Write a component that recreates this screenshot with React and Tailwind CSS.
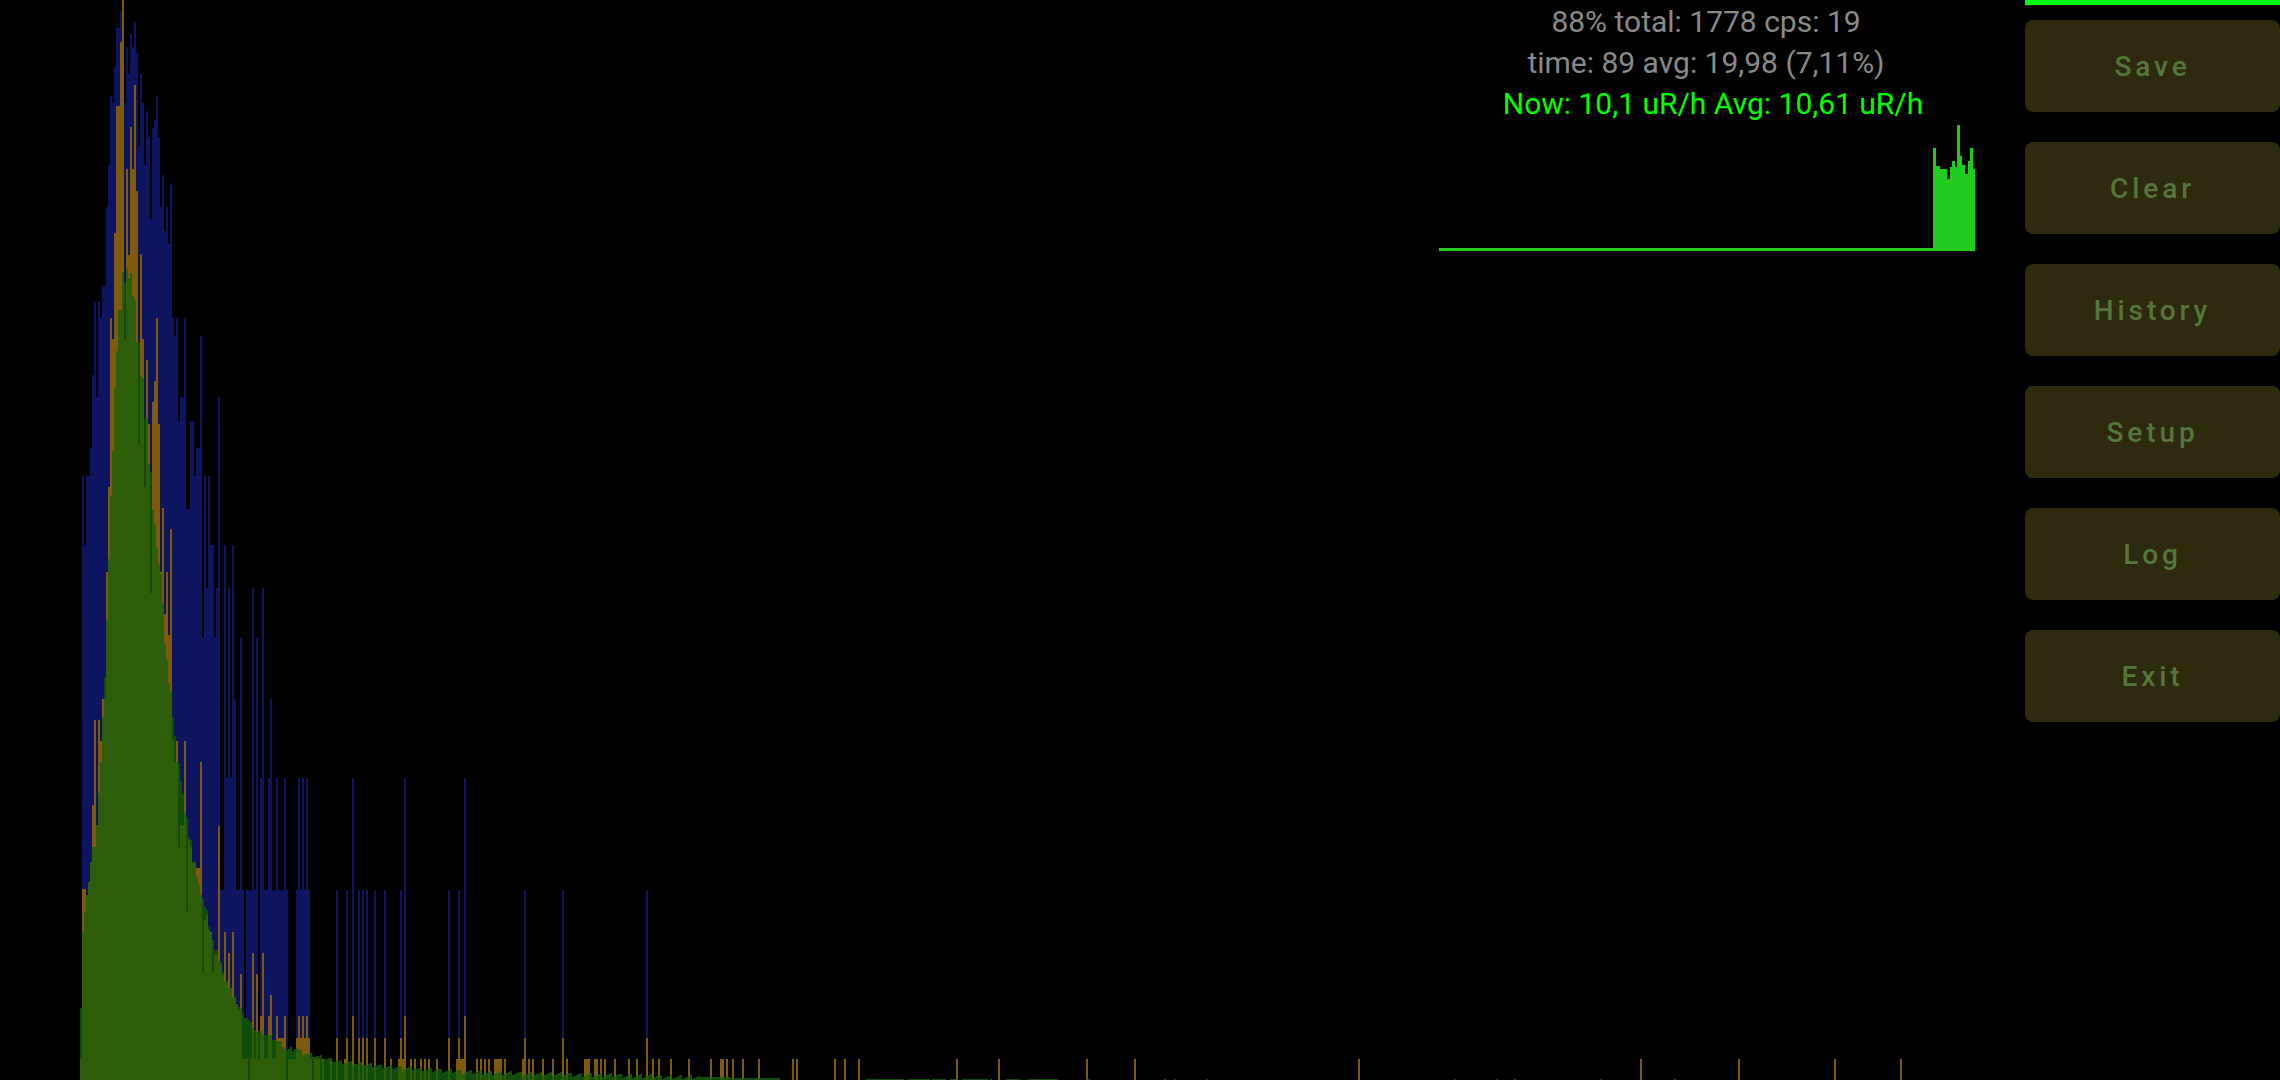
import React from 'react';

const BOTTOM = 1080;
const BLUE_C = '#0e1560';
const ORANGE_C = '#7f5a0e';
const OLIVE_C = '#2e5e0a';
const DARK_C = '#124e0b';

// column tops read off the picture, one value per 2px column
const blueStart = 82;
const blueTops = [476, 545, 476, 476, 448, 375, 302, 397, 302, 318, 286, 286, 207, 165, 96, 103, 67, 28, 28, 11, 0, 103, 47, 74, 34, 47, 22, 53, 146, 74, 103, 165, 111, 137, 219, 128, 120, 96, 137, 207, 175, 231, 207, 244, 185, 318, 336, 318, 421, 397, 397, 318, 509, 509, 421, 421, 476, 448, 448, 336, 638, 476, 588, 476, 545, 545, 638, 588, 397, 890, 890, 545, 778, 588, 778, 545, 699];

const orangeStart = 80;
const orangeTops = [1059, 889, 889, 895, 882, 862, 805, 720, 825, 720, 741, 699, 699, 572, 487, 318, 339, 233, 106, 106, 42, 0, 339, 169, 255, 127, 169, 85, 191, 445, 254, 339, 487, 360, 424, 593, 402, 381, 318, 424, 572, 508, 614, 572, 635, 529, 741, 762, 741, 847, 825, 825, 741, 911, 840, 847, 862, 862, 868, 868, 762, 973, 920, 915, 930, 932, 973, 955, 955, 826, 965, 975, 932, 981, 953, 988, 932, 997, 1004, 1010];

const greenStart = 80;
const greenTops = [1008, 932, 912, 895, 882, 862, 847, 847, 825, 793, 762, 717, 677, 619, 559, 496, 451, 388, 351, 310, 310, 272, 283, 268, 278, 273, 296, 300, 342, 342, 376, 378, 419, 419, 464, 472, 510, 524, 548, 564, 574, 603, 644, 660, 683, 691, 717, 736, 762, 763, 781, 793, 812, 817, 837, 840, 862, 862, 877, 884, 895, 899, 907, 910, 927, 932, 940, 951, 950, 961, 962, 972, 981, 981, 988, 988, 997, 997, 1004, 1007, 1008, 1013, 1018];

// green tail: x, top
const greenTail = [[246, 1018], [256, 1032], [262, 1033], [270, 1037], [280, 1043], [286, 1050], [296, 1048], [300, 1052], [310, 1055], [320, 1057], [330, 1060], [340, 1062], [350, 1063], [370, 1065], [390, 1067], [410, 1068], [430, 1070], [450, 1071], [470, 1072], [500, 1073], [540, 1074], [600, 1075], [680, 1077], [780, 1078]];

const blueSpikes = { 240: 638, 252: 588, 256: 638, 260: 778, 262: 588, 268: 778, 270: 699, 276: 778, 284: 778, 298: 778, 302: 778, 306: 778, 352: 778, 404: 778, 464: 778 };
const blueFlat = [336, 346, 358, 362, 366, 374, 384, 400, 448, 458, 524, 562, 646];

const orange1038 = [336, 346, 358, 362, 366, 374, 384, 400, 448, 458, 524, 562, 646, 278, 280, 282, 286, 296, 300, 304, 308];
const orangeSpikes = { 240: 974, 252: 953, 256: 974, 260: 1016, 262: 953, 268: 1016, 270: 995, 276: 1016, 284: 1016, 298: 1016, 302: 1016, 306: 1016, 352: 1016, 404: 1016, 464: 1016 };
const orange1059 = [330, 344, 390, 398, 402, 410, 414, 420, 424, 428, 436, 456, 460, 462, 476, 480, 484, 488, 494, 496, 498, 500, 504, 522, 528, 532, 542, 552, 566, 584, 586, 588, 594, 596, 600, 604, 614, 628, 636, 652, 658, 670, 688, 710, 720, 722, 726, 732, 742, 758, 792, 796, 834, 844, 858, 956, 998, 1086, 1134, 1358, 1640, 1738, 1834, 1900];
const noOrange = [248, 286, 312, 320, 324];

const sparseGreen = [[866, 903], [907, 928], [932, 945], [949, 957], [961, 986], [990, 990], [1006, 1019], [1027, 1056], [1085, 1089], [1164, 1164], [1174, 1174], [1206, 1206], [1454, 1454], [1467, 1467], [1475, 1475], [1496, 1496], [1514, 1514], [1587, 1587], [1600, 1600], [1625, 1625], [1647, 1647], [1674, 1674], [1749, 1749], [1767, 1767]];

function tailGreen(x) {
  for (let i = 0; i < greenTail.length - 1; i++) {
    const [x0, y0] = greenTail[i];
    const [x1, y1] = greenTail[i + 1];
    if (x >= x0 && x < x1) {
      const y = y0 + ((y1 - y0) * (x - x0)) / (x1 - x0);
      const jitter = x < 700 ? ((x * 7) % 5) - 2 : (x * 3) % 2;
      return Math.min(1079, Math.round(y + jitter));
    }
  }
  return null;
}

function buildColumns() {
  const cols = [];
  for (let x = 80; x <= 1902; x += 2) {
    let b = null;
    let o = null;
    let g = null;

    const bi = (x - blueStart) / 2;
    if (bi >= 0 && bi < blueTops.length) b = blueTops[bi];
    if (x >= 236 && x <= 286 && x !== 244 && x !== 258) b = 890;
    if (x >= 296 && x <= 308) b = 890;
    if (blueFlat.includes(x)) b = 890;
    if (blueSpikes[x]) b = blueSpikes[x];

    const oi = (x - orangeStart) / 2;
    if (oi >= 0 && oi < orangeTops.length) o = orangeTops[oi];
    else if (x < 326) o = 1059;
    if (orange1059.includes(x)) o = 1059;
    if (orange1038.includes(x)) o = 1038;
    if (orangeSpikes[x]) o = orangeSpikes[x];
    if (noOrange.includes(x)) o = null;

    const gi = (x - greenStart) / 2;
    if (gi < greenTops.length) g = greenTops[gi];
    else if (x < 866) g = tailGreen(x);
    if (sparseGreen.some(([a, c]) => x >= a && x <= c)) g = 1079;

    cols.push({ x, b, o, g });
  }
  return cols;
}

function Histogram() {
  const cols = buildColumns();
  return (
    <svg width="2025" height="1080" className="block [grid-area:1/1]" shapeRendering="crispEdges">
      {cols.map(({ x, b, o, g }) => (
        <g key={x}>
          {b !== null && <rect x={x} y={b} width="2" height={BOTTOM - b} fill={BLUE_C} />}
          {o !== null && <rect x={x} y={o} width="2" height={BOTTOM - o} fill={ORANGE_C} />}
          {g !== null && <rect x={x} y={g} width="2" height={BOTTOM - g} fill={DARK_C} />}
          {g !== null && o !== null && (
            <rect x={x} y={Math.max(g, o)} width="2" height={BOTTOM - Math.max(g, o)} fill={OLIVE_C} />
          )}
        </g>
      ))}
    </svg>
  );
}

// small dose-rate graph, 536 wide, bars start at 494
const sparkPoints = '0,124 494,124 494,24 497,24 497,42 501,42 501,45 508,45 508,55 511,55 511,43 513,43 513,37 516,37 516,43 518,43 518,1 521,1 521,32 523,32 523,41 526,41 526,50 529,50 529,37 531,37 531,24 534,24 534,45 536,45 536,127 0,127';

function Spark() {
  return (
    <svg width="536" height="127" className="block">
      <polygon points={sparkPoints} fill="#20cc20" />
    </svg>
  );
}

const buttons = ['Save', 'Clear', 'History', 'Setup', 'Log', 'Exit'];

export default function App() {
  return (
    <div className="flex h-[1080px] w-[2280px] overflow-hidden bg-black font-['Roboto',sans-serif]">
      <div className="grid w-[2025px] shrink-0">
        <Histogram />
        <div className="flex justify-end pr-[50px] [grid-area:1/1]">
          <div className="w-[536px] pt-px">
            <div className="pr-[2px] text-center text-[30px] leading-[41px] whitespace-nowrap">
              <div className="text-[#8a8a8a]">88% total: 1778 cps: 19</div>
              <div className="text-[#8a8a8a]">time: 89 avg: 19,98 (7,11%)</div>
              <div className="pl-[14px] text-[#00ff00]">Now: 10,1 uR/h Avg: 10,61 uR/h</div>
            </div>
            <Spark />
          </div>
        </div>
      </div>
      <div className="flex flex-1 flex-col">
        <div className="h-[5px] bg-[#00ff00]" />
        <div className="mt-[15px] flex flex-col gap-[30px]">
          {buttons.map((label) => (
            <button
              key={label}
              className="flex h-[92px] items-center justify-center rounded-lg bg-[#2e2a0e] pt-0.5 text-[28px] font-medium tracking-[3.9px] text-[#55773a]"
            >
              {label}
            </button>
          ))}
        </div>
      </div>
    </div>
  );
}
